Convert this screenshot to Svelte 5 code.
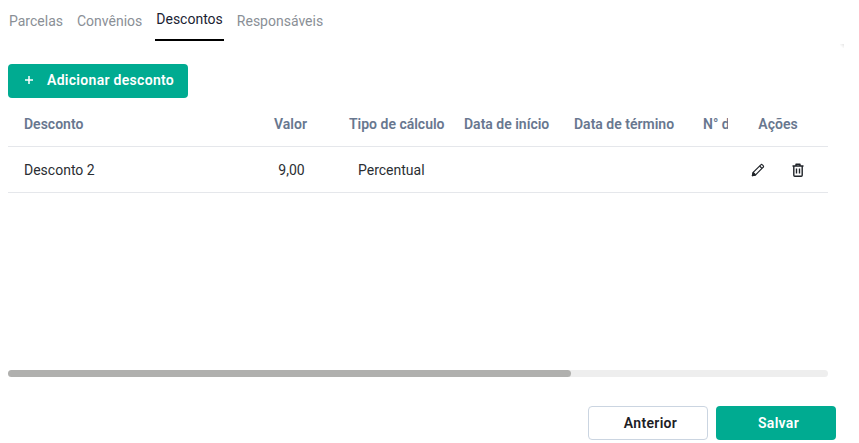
<script>
  const tabs = ['Parcelas', 'Convênios', 'Descontos', 'Responsáveis'];
  const active = 'Descontos';
  const columns = ['Desconto', 'Valor', 'Tipo de cálculo', 'Data de início', 'Data de término', 'N° de parcelas'];
  const rows = [{ name: 'Desconto 2', value: '9,00', type: 'Percentual' }];
  const scrollRatio = 68.7;
</script>

<div class="page">
  <span class="corner"></span>
  <nav class="tabs">
    {#each tabs as tab}
      <button class="tab" class:active={tab === active}>{tab}</button>
    {/each}
  </nav>

  <button class="add">
    <svg width="10" height="10" viewBox="0 0 10 10" aria-hidden="true"><path d="M5 1v8M1 5h8" stroke="#fff" stroke-width="1.5" fill="none" /></svg>
    <span>Adicionar desconto</span>
  </button>

  <div class="table">
    <div class="row head">
      {#each columns as col, i}
        <div class="cell c{i}">{col}</div>
      {/each}
      <div class="cell actions">Ações</div>
    </div>
    {#each rows as row}
      <div class="row body">
        <div class="cell c0">{row.name}</div>
        <div class="cell c1">{row.value}</div>
        <div class="cell c2">{row.type}</div>
        <div class="cell c3"></div>
        <div class="cell c4"></div>
        <div class="cell c5"></div>
        <div class="cell actions icons">
          <svg width="16" height="16" viewBox="0 0 16 16" fill="none" stroke="#1f2328" stroke-width="1.2" stroke-linejoin="round" aria-label="Editar">
            <path d="M2.4 13.6l.8-3.2L10.8 2.8a1.1 1.1 0 0 1 1.6 0l.8.8a1.1 1.1 0 0 1 0 1.6l-7.6 7.6z" />
            <path d="M9.6 4l2.4 2.4" />
            <path d="M2.4 13.6l.8-3.2 2.4 2.4z" fill="#1f2328" />
          </svg>
          <svg width="16" height="16" viewBox="0 0 16 16" fill="none" stroke="#1f2328" stroke-width="1.4" stroke-linejoin="round" aria-label="Excluir">
            <path d="M2.5 4h11M6 4V2.2h4V4M3.8 4v9.2a1 1 0 0 0 1 1h6.4a1 1 0 0 0 1-1V4M6.5 6.6v5M9.5 6.6v5" />
          </svg>
        </div>
      </div>
    {/each}
    <div class="track"><div class="thumb" style="width: {scrollRatio}%"></div></div>
  </div>

  <footer class="footer">
    <button class="btn outline">Anterior</button>
    <button class="btn solid">Salvar</button>
  </footer>
</div>

<style>
  :global(body) {
    margin: 0;
    background: #fff;
    font-family: Roboto, "Liberation Sans", sans-serif;
  }
  button {
    font-family: inherit;
    cursor: pointer;
  }
  .page {
    position: relative;
    width: 859px;
    height: 443px;
    box-sizing: border-box;
    padding: 0 23px 0 8px;
    display: flex;
    flex-direction: column;
    overflow: hidden;
  }
  .corner {
    position: absolute;
    left: 840px;
    top: 44px;
    width: 4px;
    height: 4px;
    background: linear-gradient(225deg, #e4e4e4, #fff 70%);
  }
  .tabs {
    display: flex;
    height: 41px;
  }
  .tab {
    border: 0;
    background: none;
    padding: 2px 1px 0;
    margin-right: 12px;
    height: 41px;
    font-size: 14px;
    line-height: 39px;
    color: #8a8f96;
    border-bottom: 2px solid transparent;
    box-sizing: border-box;
  }
  .tab.active {
    color: #1a2233;
    border-bottom-color: #000;
    padding-top: 0;
  }
  .add {
    margin-top: 23px;
    width: 180px;
    height: 34px;
    flex: none;
    border: 0;
    border-radius: 4px;
    background: #00ab91;
    color: #fff;
    font-size: 14px;
    font-weight: 600;
    letter-spacing: 0.3px;
    display: flex;
    align-items: center;
    gap: 13px;
    padding: 0 0 2px 16px;
  }
  .table {
    width: 820px;
    flex: 1;
    display: flex;
    flex-direction: column;
  }
  .row {
    display: flex;
    align-items: center;
    border-bottom: 1px solid #e5e7eb;
    font-size: 14px;
    box-sizing: border-box;
  }
  .head {
    height: 49px;
    padding-bottom: 4px;
    color: #68778f;
    font-weight: 600;
  }
  .body {
    height: 46px;
    color: #2a2e33;
  }
  .cell {
    box-sizing: border-box;
    white-space: nowrap;
    overflow: hidden;
    flex: none;
  }
  .head .cell {
    padding-top: 8px;
    line-height: 17px;
  }
  .c0 { width: 250px; padding-left: 16px; }
  .c1 { width: 65px; text-align: center; }
  .body .c1 { padding-left: 2px; }
  .c2 { width: 141px; padding-left: 26px; }
  .body .c2 { padding-left: 35px; }
  .c3 { width: 110px; }
  .c4 { width: 129px; }
  .c5 { width: 25px; }
  .actions { width: 100px; text-align: center; }
  .icons {
    display: flex;
    justify-content: center;
    gap: 24px;
  }
  .track {
    margin-top: 177px;
    height: 7px;
    background: #eeeeee;
    border-radius: 4px;
    flex: none;
  }
  .thumb {
    height: 100%;
    background: #b0b0ae;
    border-radius: 4px;
  }
  .footer {
    margin-top: 29px;
    margin-bottom: 3px;
    display: flex;
    justify-content: flex-end;
    gap: 8px;
    flex: none;
  }
  .btn {
    width: 120px;
    height: 34px;
    border-radius: 4px;
    font-size: 14px;
    font-weight: 600;
    letter-spacing: 0.3px;
    box-sizing: border-box;
    padding: 0 0 0 5px;
  }
  .outline {
    background: #fff;
    border: 1px solid #cbd5e1;
    color: #1d2025;
  }
  .solid {
    background: #00ab91;
    border: 0;
    color: #fff;
  }
</style>
